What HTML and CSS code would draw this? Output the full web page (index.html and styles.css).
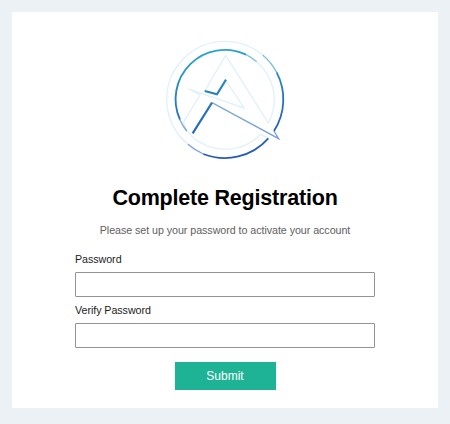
FILE: index.html
```html
<!DOCTYPE html>
<html lang="en">
<head>
<meta charset="utf-8">
<title>Complete Registration</title>
<link rel="stylesheet" href="styles.css">
</head>
<body>
<main class="card">
  <svg class="logo" viewBox="0 0 390 390" fill="none" aria-hidden="true">
    <defs>
      <linearGradient id="blue" gradientUnits="userSpaceOnUse" x1="160" y1="30" x2="200" y2="370">
        <stop offset="0" stop-color="#28a9cc"/>
        <stop offset=".5" stop-color="#2878bd"/>
        <stop offset="1" stop-color="#2457c0"/>
      </linearGradient>
    </defs>
    <g class="faint">
      <path d="M84 328A175 175 0 0 1 20 194A175 175 0 0 1 195 19A175 175 0 0 1 308 60"/>
      <path d="M290 80A148 148 0 0 1 325 264L197 61L134 168"/>
      <path d="M197 135L252 219L85 162L120 180L70 262L82 290"/>
      <path d="M80 286A148 148 0 0 0 302 298L325 310"/>
    </g>
    <g class="medium">
      <path d="M156 203L356 311L342 288"/>
      <path d="M308 60A175 175 0 0 1 350 112"/>
      <path d="M84 328A175 175 0 0 0 130 357"/>
      <path d="M80 288A148 148 0 0 1 60 254"/>
      <path d="M258 59A148 148 0 0 1 290 80"/>
    </g>
    <g class="strong">
      <path d="M60 254A148 148 0 0 1 258 59"/>
      <path d="M350 112A175 175 0 0 1 342 288"/>
      <path d="M325 310A175 175 0 0 1 130 357"/>
      <path class="bar" d="M134 168L171 178L198 134M156 203L98 295"/>
    </g>
  </svg>
  <h1 class="title">Complete Registration</h1>
  <p class="intro">Please set up your password to activate your account</p>
  <form class="form">
    <label class="label" for="password">Password</label>
    <input class="input" id="password" type="password">
    <label class="label" for="verify">Verify Password</label>
    <input class="input" id="verify" type="password">
    <button class="submit" type="button">Submit</button>
  </form>
</main>
</body>
</html>
```
FILE: styles.css
```css
* { box-sizing: border-box; }
body {
  margin: 0;
  padding: 12px;
  height: 424px;
  background: #ebf1f5;
  font-family: "Liberation Sans", Arial, sans-serif;
}
.card {
  display: flex;
  flex-direction: column;
  align-items: center;
  height: 396px;
  padding-top: 23px;
  background: #fff;
}
.logo { width: 130px; height: 130px; flex: none; }
.faint { stroke: #e0f1fb; stroke-width: 4; }
.medium { stroke: url(#blue); stroke-width: 4; opacity: .6; }
.strong { stroke: url(#blue); stroke-width: 5.5; }
.bar { stroke-width: 6.5; }
.title {
  margin: 20px 0 0;
  font-size: 21.5px;
  line-height: 26px;
  letter-spacing: -0.2px;
  white-space: nowrap;
  color: #000;
}
.intro {
  margin: 12px 0 0;
  font-size: 10.7px;
  line-height: 14px;
  letter-spacing: -0.05px;
  color: #606060;
}
.form {
  display: flex;
  flex-direction: column;
  width: 300px;
  margin-top: 15px;
}
.label {
  font-size: 10.7px;
  line-height: 14px;
  letter-spacing: -0.05px;
  color: #1c1c1c;
}
.input {
  height: 25px;
  margin: 6px 0;
  padding: 0 8px;
  border: 1px solid #939393;
  border-radius: 1px;
  background: #fff;
}
.submit {
  align-self: center;
  width: 101px;
  height: 28px;
  margin-top: 8px;
  padding: 0;
  border: 0;
  background: #1db394;
  color: #fff;
  font: 12px "Liberation Sans", Arial, sans-serif;
}
```
